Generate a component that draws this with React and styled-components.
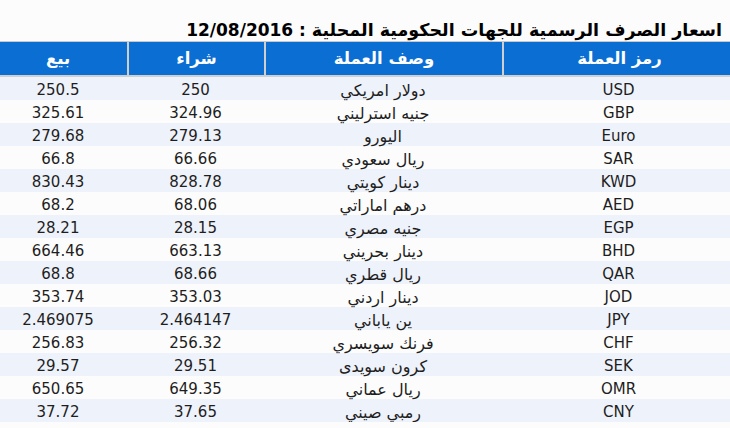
import styled, { createGlobalStyle } from "styled-components";

const GlobalStyle = createGlobalStyle`
  html, body {
    margin: 0;
    padding: 0;
    overflow: hidden;
    background: #fcfcfc;
  }
  body {
    font-family: "DejaVu Sans", Verdana, sans-serif;
  }
`;

const Page = styled.div`
  direction: rtl;
  padding-top: 20px;
  width: 730px;
`;

const Title = styled.div`
  font-size: 17px;
  font-weight: bold;
  line-height: 21px;
  color: #000;
  padding-right: 8px;
  white-space: nowrap;
`;

// DejaVu's Arabic glyphs run a bit small next to its latin, so bump them
const Ar = styled.span`
  font-size: ${(p) => p.$size || "1.07em"};
`;

const Table = styled.div`
  width: 746px;
  margin-right: -5px;
`;

const cols = "233px 238px 137px 138px";

const HeadRow = styled.div`
  display: grid;
  grid-template-columns: ${cols};
  background: #0b6ed3;
  border-top: 1px solid #c9c9c9;
  border-bottom: 2px solid #cfcfcf;
  height: 33px;
`;

const HeadCell = styled.div`
  color: #fff;
  font-weight: bold;
  font-size: 16.5px;
  text-align: center;
  line-height: 33px;
  border-left: ${(p) => (p.$last ? "none" : "2px solid #cfcfcf")};
`;

const Row = styled.div`
  display: grid;
  grid-template-columns: ${cols};
  height: 23px;
  box-sizing: border-box;
  padding-top: 4px;
  background: ${(p) => (p.$striped ? "#eef2fa" : "#fcfcfc")};
`;

const Cell = styled.div`
  font-size: ${(p) => (p.$arabic ? "16px" : "15px")};
  line-height: 19px;
  color: #1e1e1e;
  text-align: center;
  white-space: nowrap;
`;

const rates = [
  ["USD", "دولار امريكي", "250", "250.5"],
  ["GBP", "جنيه استرليني", "324.96", "325.61"],
  ["Euro", "اليورو", "279.13", "279.68"],
  ["SAR", "ريال سعودي", "66.66", "66.8"],
  ["KWD", "دينار كويتي", "828.78", "830.43"],
  ["AED", "درهم اماراتي", "68.06", "68.2"],
  ["EGP", "جنيه مصري", "28.15", "28.21"],
  ["BHD", "دينار بحريني", "663.13", "664.46"],
  ["QAR", "ريال قطري", "68.66", "68.8"],
  ["JOD", "دينار اردني", "353.03", "353.74"],
  ["JPY", "ين ياباني", "2.464147", "2.469075"],
  ["CHF", "فرنك سويسري", "256.32", "256.83"],
  ["SEK", "كرون سويدى", "29.51", "29.57"],
  ["OMR", "ريال عماني", "649.35", "650.65"],
  ["CNY", "رمبي صيني", "37.65", "37.72"],
];

const headers = ["رمز العملة", "وصف العملة", "شراء", "بيع"];

export default function App() {
  return (
    <Page>
      <GlobalStyle />
      <Title>
        <Ar $size="17.5px">اسعار الصرف الرسمية للجهات الحكومية المحلية</Ar> : 12/08/2016
      </Title>
      <Table>
        <HeadRow>
          {headers.map((h, i) => (
            <HeadCell key={h} $last={i === headers.length - 1}>
              {h}
            </HeadCell>
          ))}
        </HeadRow>
        {rates.map((r, i) => (
          <Row key={r[0]} $striped={i % 2 === 0}>
            {r.map((v, j) => (
              <Cell key={j} $arabic={j === 1}>
                {v}
              </Cell>
            ))}
          </Row>
        ))}
      </Table>
    </Page>
  );
}
